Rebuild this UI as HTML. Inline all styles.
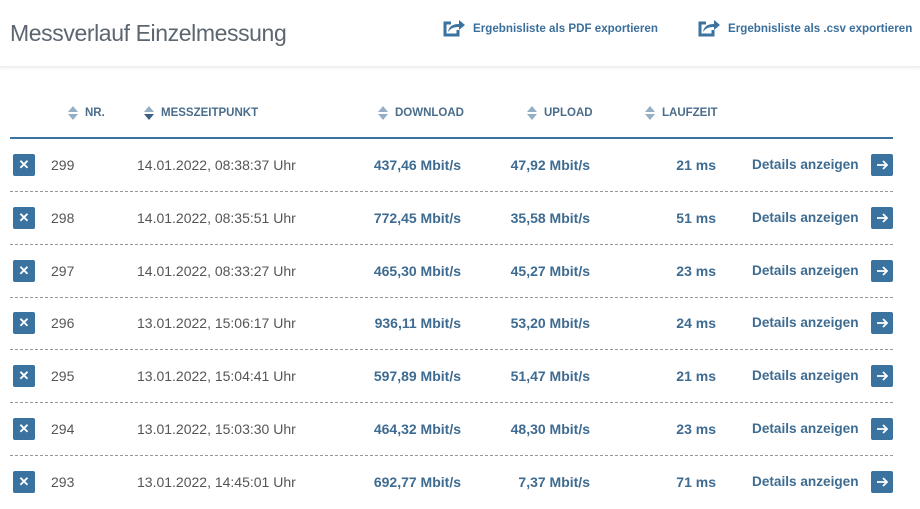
<!DOCTYPE html>
<html><head><meta charset="utf-8"><style>
*{margin:0;padding:0;box-sizing:border-box}
body{width:920px;height:507px;background:#fff;font-family:"Liberation Sans",sans-serif;position:relative;overflow:hidden;color:#555}
.hdr{position:absolute;left:0;top:0;width:920px;height:67px;box-shadow:0 1px 3px rgba(0,0,0,.08);border-bottom:1px solid #f0f0f0}
.title{position:absolute;left:10px;top:20px;font-size:23px;color:#5b6670;letter-spacing:-0.4px;white-space:nowrap}
.exp{position:absolute;top:18px;font-size:11.6px;font-weight:bold;color:#3a6f9c;display:flex;align-items:center;white-space:nowrap}
.exp svg{margin-right:7px}
.th{position:absolute;top:105px;font-size:11.5px;font-weight:bold;color:#4a6d8c;display:flex;align-items:center}
.th svg{margin-right:6px}
.line{position:absolute;left:10px;top:137px;width:883px;height:2px;background:#3a72a0}
.row{position:absolute;left:10px;width:883px;height:53px}
.row.d{border-bottom:1px dashed #999}
.x{position:absolute;left:3px;top:15px;width:22px;height:22px;background:#3a72a0;border-radius:2px;color:#fff;text-align:center;line-height:22px;font-size:13px;font-weight:bold}
.c{position:absolute;top:18px;font-size:14px;white-space:nowrap}
.b{font-weight:bold;color:#3e6b91}
.bd{font-size:13.6px}
.r{text-align:right}
.arr{position:absolute;left:861px;top:15px;width:22px;height:22px;background:#3a72a0;border-radius:2px}
</style></head><body>
<div class="hdr"></div>
<div class="title">Messverlauf Einzelmessung</div>
<div class="exp" style="left:443px"><svg width="23" height="20" viewBox="0 0 23 20"><path d="M8 5H2v12h13v-5" fill="none" stroke="#3a72a0" stroke-width="3"/><path d="M5 14c1-6 5-8 11-8V2l6 5-6 5V9c-5 0-8 1-11 5z" fill="#3a72a0"/></svg>Ergebnisliste als PDF exportieren</div>
<div class="exp" style="left:698px"><svg width="23" height="20" viewBox="0 0 23 20"><path d="M8 5H2v12h13v-5" fill="none" stroke="#3a72a0" stroke-width="3"/><path d="M5 14c1-6 5-8 11-8V2l6 5-6 5V9c-5 0-8 1-11 5z" fill="#3a72a0"/></svg>Ergebnisliste als .csv exportieren</div>

<div class="th" style="left:67px"><svg width="12" height="16"><path d="M6 1l5 6H1z" fill="#94aec6"/><path d="M6 15l5-6H1z" fill="#94aec6"/></svg>NR.</div>
<div class="th" style="left:143px"><svg width="12" height="16"><path d="M6 1l5 6H1z" fill="#94aec6"/><path d="M6 15l5-6H1z" fill="#3a5f80"/></svg>MESSZEITPUNKT</div>
<div class="th" style="left:377px"><svg width="12" height="16"><path d="M6 1l5 6H1z" fill="#94aec6"/><path d="M6 15l5-6H1z" fill="#94aec6"/></svg>DOWNLOAD</div>
<div class="th" style="left:526px"><svg width="12" height="16"><path d="M6 1l5 6H1z" fill="#94aec6"/><path d="M6 15l5-6H1z" fill="#94aec6"/></svg>UPLOAD</div>
<div class="th" style="left:644px"><svg width="12" height="16"><path d="M6 1l5 6H1z" fill="#94aec6"/><path d="M6 15l5-6H1z" fill="#94aec6"/></svg>LAUFZEIT</div>
<div class="line"></div>

<div class="row d" style="top:139px"><div class="x">✕</div><div class="c" style="left:41px">299</div><div class="c" style="left:127px">14.01.2022, 08:38:37 Uhr</div><div class="c b r" style="left:330px;width:121px">437,46 Mbit/s</div><div class="c b r" style="left:460px;width:120px">47,92 Mbit/s</div><div class="c b r" style="left:600px;width:106px">21 ms</div><div class="c b bd" style="left:742px">Details anzeigen</div><div class="arr"><svg width="22" height="22"><path d="M6 11h10M12 7l4 4-4 4" stroke="#fff" stroke-width="1.8" fill="none"/></svg></div></div>
<div class="row d" style="top:192px"><div class="x">✕</div><div class="c" style="left:41px">298</div><div class="c" style="left:127px">14.01.2022, 08:35:51 Uhr</div><div class="c b r" style="left:330px;width:121px">772,45 Mbit/s</div><div class="c b r" style="left:460px;width:120px">35,58 Mbit/s</div><div class="c b r" style="left:600px;width:106px">51 ms</div><div class="c b bd" style="left:742px">Details anzeigen</div><div class="arr"><svg width="22" height="22"><path d="M6 11h10M12 7l4 4-4 4" stroke="#fff" stroke-width="1.8" fill="none"/></svg></div></div>
<div class="row d" style="top:245px"><div class="x">✕</div><div class="c" style="left:41px">297</div><div class="c" style="left:127px">14.01.2022, 08:33:27 Uhr</div><div class="c b r" style="left:330px;width:121px">465,30 Mbit/s</div><div class="c b r" style="left:460px;width:120px">45,27 Mbit/s</div><div class="c b r" style="left:600px;width:106px">23 ms</div><div class="c b bd" style="left:742px">Details anzeigen</div><div class="arr"><svg width="22" height="22"><path d="M6 11h10M12 7l4 4-4 4" stroke="#fff" stroke-width="1.8" fill="none"/></svg></div></div>
<div class="row d" style="top:297px"><div class="x">✕</div><div class="c" style="left:41px">296</div><div class="c" style="left:127px">13.01.2022, 15:06:17 Uhr</div><div class="c b r" style="left:330px;width:121px">936,11 Mbit/s</div><div class="c b r" style="left:460px;width:120px">53,20 Mbit/s</div><div class="c b r" style="left:600px;width:106px">24 ms</div><div class="c b bd" style="left:742px">Details anzeigen</div><div class="arr"><svg width="22" height="22"><path d="M6 11h10M12 7l4 4-4 4" stroke="#fff" stroke-width="1.8" fill="none"/></svg></div></div>
<div class="row d" style="top:350px"><div class="x">✕</div><div class="c" style="left:41px">295</div><div class="c" style="left:127px">13.01.2022, 15:04:41 Uhr</div><div class="c b r" style="left:330px;width:121px">597,89 Mbit/s</div><div class="c b r" style="left:460px;width:120px">51,47 Mbit/s</div><div class="c b r" style="left:600px;width:106px">21 ms</div><div class="c b bd" style="left:742px">Details anzeigen</div><div class="arr"><svg width="22" height="22"><path d="M6 11h10M12 7l4 4-4 4" stroke="#fff" stroke-width="1.8" fill="none"/></svg></div></div>
<div class="row d" style="top:403px"><div class="x">✕</div><div class="c" style="left:41px">294</div><div class="c" style="left:127px">13.01.2022, 15:03:30 Uhr</div><div class="c b r" style="left:330px;width:121px">464,32 Mbit/s</div><div class="c b r" style="left:460px;width:120px">48,30 Mbit/s</div><div class="c b r" style="left:600px;width:106px">23 ms</div><div class="c b bd" style="left:742px">Details anzeigen</div><div class="arr"><svg width="22" height="22"><path d="M6 11h10M12 7l4 4-4 4" stroke="#fff" stroke-width="1.8" fill="none"/></svg></div></div>
<div class="row" style="top:456px"><div class="x">✕</div><div class="c" style="left:41px">293</div><div class="c" style="left:127px">13.01.2022, 14:45:01 Uhr</div><div class="c b r" style="left:330px;width:121px">692,77 Mbit/s</div><div class="c b r" style="left:460px;width:120px">7,37 Mbit/s</div><div class="c b r" style="left:600px;width:106px">71 ms</div><div class="c b bd" style="left:742px">Details anzeigen</div><div class="arr"><svg width="22" height="22"><path d="M6 11h10M12 7l4 4-4 4" stroke="#fff" stroke-width="1.8" fill="none"/></svg></div></div>
</body></html>
